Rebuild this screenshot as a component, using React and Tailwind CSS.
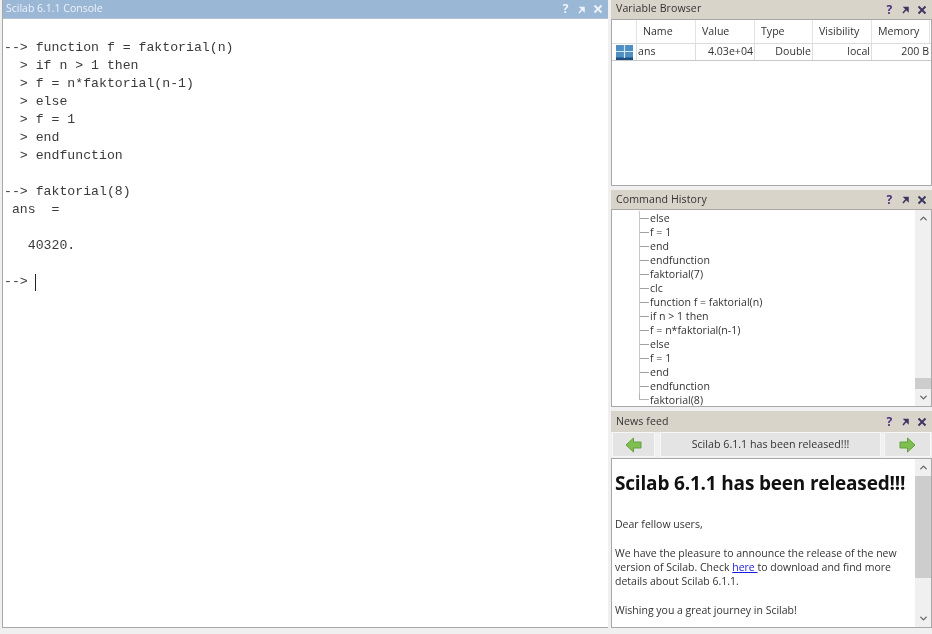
import { ChevronUp, ChevronDown } from "lucide-react";

const consoleLines = [
  "",
  "--> function f = faktorial(n)",
  "  > if n > 1 then",
  "  > f = n*faktorial(n-1)",
  "  > else",
  "  > f = 1",
  "  > end",
  "  > endfunction",
  "",
  "--> faktorial(8)",
  " ans  =",
  "",
  "   40320.",
  "",
];

const historyLines = [
  "else",
  "f = 1",
  "end",
  "endfunction",
  "faktorial(7)",
  "clc",
  "function f = faktorial(n)",
  "if n > 1 then",
  "f = n*faktorial(n-1)",
  "else",
  "f = 1",
  "end",
  "endfunction",
  "faktorial(8)",
];

const columns = [
  { label: "Name", width: "w-[59px]" },
  { label: "Value", width: "w-[59px]" },
  { label: "Type", width: "w-[58px]" },
  { label: "Visibility", width: "w-[59px]" },
  { label: "Memory", width: "w-[58px]" },
];

function TitleIcons({ light }) {
  const color = light ? "#eef3f9" : "#3b3560";
  return (
    <div className="flex items-center gap-[7px] pr-[5px]">
      <span className={`w-[9px] text-center text-[12px] leading-none font-bold ${light ? "text-[#eef3f9]" : "text-[#4a2f80]"}`}>?</span>
      <svg width="9" height="9" viewBox="0 0 9 9">
        <path d="M2 8 L5 4.5 M3.5 2.5 H7 V6 Z" stroke={color} strokeWidth="1.5" fill={color} />
      </svg>
      <svg width="10" height="10" viewBox="0 0 10 10">
        <path d="M1.5 1.5 L8.5 8.5 M8.5 1.5 L1.5 8.5" stroke={color} strokeWidth="1.9" />
      </svg>
    </div>
  );
}

function PanelTitle({ title, height, textClass }) {
  return (
    <div className={`flex items-center justify-between bg-[#d9d4ca] pl-[5px] text-[10.6px] tracking-[0.08px] text-[#333] ${height}`}>
      <span className={textClass}>{title}</span>
      <TitleIcons />
    </div>
  );
}

function Scrollbar({ spacer, thumb }) {
  return (
    <div className="flex w-[16px] shrink-0 flex-col bg-[#f0f0f0] text-[#666]">
      <div className="flex h-[17px] items-center justify-center">
        <ChevronUp size={11} strokeWidth={3} />
      </div>
      <div className={`shrink-0 ${spacer}`} />
      <div className={`shrink-0 bg-[#cdcdcd] ${thumb}`} />
      <div className="flex-1" />
      <div className="flex h-[17px] items-center justify-center">
        <ChevronDown size={11} strokeWidth={3} />
      </div>
    </div>
  );
}

function GreenArrow({ flip }) {
  return (
    <svg width="17" height="16" viewBox="0 0 17 16" className={flip ? "-scale-x-100" : ""}>
      <path d="M1 8 L8.5 1 V5 H16 V11 H8.5 V15 Z" fill="#7fbf50" stroke="#639f3e" strokeWidth="1" />
    </svg>
  );
}

export default function App() {
  return (
    <div className="flex h-[634px] w-[932px] flex-col overflow-hidden bg-[#f0f0f0] font-['Open_Sans',sans-serif] blur-[0.4px]">
      <div className="flex h-[628px] pl-[2px]">
        {/* console */}
        <div className="flex w-[606px] flex-col border-b border-l border-[#a8a8a8]">
          <div className="flex h-[19px] shrink-0 items-center justify-between border-b border-[#b9c4d0] bg-[#9bb7d6] pl-[3px] text-[10.5px] text-[#edf2f8]">
            <span>Scilab 6.1.1 Console</span>
            <TitleIcons light />
          </div>
          <div className="flex-1 bg-white pt-[2px] font-['Liberation_Mono',monospace] text-[13.2px] leading-[18px] text-[#3a3a3a]">
            {consoleLines.map((line, i) => (
              <div key={i} className="h-[18px] pl-px whitespace-pre">{line}</div>
            ))}
            <div className="flex h-[18px] items-center pl-px whitespace-pre">
              <span>{"--> "}</span>
              <span className="-ml-px h-[17px] w-px bg-[#222]" />
            </div>
          </div>
        </div>

        {/* right column */}
        <div className="ml-[3px] flex w-[321px] flex-col">
          <PanelTitle title="Variable Browser" height="h-[19px]" textClass="-translate-y-px" />
          <div className="h-[167px] border border-[#a8a8a8] bg-white text-[10.6px] text-[#333]">
            <div className="flex h-[24px] border-b border-[#ddd]">
              <div className="w-[25px] border-r border-[#e4e4e4]" />
              {columns.map((c) => (
                <div key={c.label} className={`flex items-center border-r border-[#e4e4e4] pt-px pl-[6px] ${c.width}`}>
                  {c.label}
                </div>
              ))}
            </div>
            <div className="flex h-[17px] border-b border-[#c8c8c8]">
              <div className="flex w-[25px] items-center justify-center border-r border-[#ddd]">
                <svg width="17" height="15" viewBox="0 0 17 15">
                  <rect width="17" height="15" fill="#4f8fc4" />
                  <rect y="12.5" width="17" height="2.5" fill="#1f4f80" />
                  <path d="M8.5 0 V13 M0 6.5 H17" stroke="#d5e6f4" strokeWidth="1.2" />
                </svg>
              </div>
              <div className="flex w-[59px] items-center border-r border-[#ddd] pl-[1px]">ans</div>
              <div className="flex w-[59px] items-center justify-end border-r border-[#ddd] pr-[1px]">4.03e+04</div>
              <div className="flex w-[58px] items-center justify-end border-r border-[#ddd] pr-[1px]">Double</div>
              <div className="flex w-[59px] items-center justify-end border-r border-[#ddd] pr-[1px]">local</div>
              <div className="flex w-[58px] items-center justify-end pr-[1px]">200 B</div>
            </div>
          </div>

          <div className="h-[4px] shrink-0" />
          <PanelTitle title="Command History" height="h-[19px]" />
          <div className="flex h-[198px] border border-[#a8a8a8] bg-white text-[10.6px] text-[#333]">
            <div className="min-w-0 flex-1 pt-px pl-[27px] leading-[14px]">
              {historyLines.map((line, i) => (
                <div key={i} className="flex h-[14px]">
                  {i === historyLines.length - 1 ? (
                    <div className="h-[7px] w-[10px] border-b border-l border-[#b4b4b4]" />
                  ) : (
                    <div className="flex h-[14px] w-[10px] items-center border-l border-[#c8c8c8]">
                      <div className="h-px w-full bg-[#a0a0a0]" />
                    </div>
                  )}
                  <span className="pl-px whitespace-pre">{line}</span>
                </div>
              ))}
            </div>
            <Scrollbar spacer="h-[151px]" thumb="h-[11px]" />
          </div>

          <div className="h-[4px] shrink-0" />
          <PanelTitle title="News feed" height="h-[21px]" />
          <div className="flex h-[26px] shrink-0 items-stretch gap-[5px] pb-[1px] pl-[1px] text-[10.7px] text-[#333]">
            <div className="flex w-[43px] items-center justify-center border border-[#f6f6f6] bg-[#e4e4e4]">
              <GreenArrow />
            </div>
            <div className="flex w-[221px] items-center justify-center border border-[#f6f6f6] bg-[#e4e4e4]">
              Scilab 6.1.1 has been released!!!
            </div>
            <div className="ml-[-2px] flex w-[47px] items-center justify-center border border-[#f6f6f6] bg-[#e4e4e4]">
              <GreenArrow flip />
            </div>
          </div>
          <div className="flex min-h-0 flex-1 border border-[#a8a8a8] bg-white text-[#333]">
            <div className="min-w-0 flex-1 pl-[3px] text-[10.5px] leading-[14px]">
              <h1 className="mt-[10px] mb-[20px] text-[19px] leading-[28px] font-bold tracking-[-0.18px] whitespace-nowrap text-[#111]">Scilab 6.1.1 has been released!!!</h1>
              <p>Dear fellow users,</p>
              <p className="mt-[15px]">
                We have the pleasure to announce the release of the new version of Scilab. Check{" "}
                <span className="text-[#1a1ae0] underline">here </span>
                to download and find more details about Scilab 6.1.1.
              </p>
              <p className="mt-[15px]">Wishing you a great journey in Scilab!</p>
            </div>
            <Scrollbar spacer="h-0" thumb="h-[102px]" />
          </div>
        </div>
      </div>
    </div>
  );
}
